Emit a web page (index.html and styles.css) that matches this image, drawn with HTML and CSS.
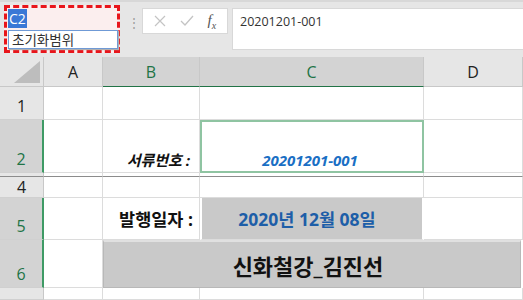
FILE: index.html
```html
<!DOCTYPE html>
<html lang="ko">
<head>
    <meta charset="UTF-8">
    <title>서류번호</title>
    <link rel="stylesheet" href="styles.css">
</head>
<body>
    <div class="topbar">
        <div class="namebox">
            <div class="ref"><span class="sel">C2</span></div>
            <div class="namelist">초기화범위</div>
        </div>
        <div class="dots">⋮</div>
        <div class="fxbtns">
            <svg width="12" height="12" viewBox="0 0 12 12"><path d="M1 1 L11 11 M11 1 L1 11" stroke="#c4c4c4" stroke-width="1.2" fill="none"/></svg>
            <svg width="14" height="12" viewBox="0 0 14 12"><path d="M1 6 L5 10 L13 1" stroke="#c4c4c4" stroke-width="1.3" fill="none"/></svg>
            <span class="fx">f<sub>x</sub></span>
        </div>
        <div class="formula">20201201-001</div>
    </div>

    <div class="sheet">
        <div class="corner"><span class="tri"></span></div>
        <div class="colhead">A</div>
        <div class="colhead on">B</div>
        <div class="colhead on">C</div>
        <div class="colhead">D</div>

        <div class="rowhead">1</div>
        <div class="cell"></div>
        <div class="cell"></div>
        <div class="cell"></div>
        <div class="cell"></div>

        <div class="rowhead on">2</div>
        <div class="cell"></div>
        <div class="cell label-i">서류번호 :</div>
        <div class="cell active">20201201-001</div>
        <div class="cell"></div>

        <div class="rowhead hid"></div>
        <div class="cell hid"></div>
        <div class="cell hid"></div>
        <div class="cell hid"></div>
        <div class="cell hid"></div>

        <div class="rowhead r4">4</div>
        <div class="cell"></div>
        <div class="cell"></div>
        <div class="cell"></div>
        <div class="cell"></div>

        <div class="rowhead on">5</div>
        <div class="cell"></div>
        <div class="cell label">발행일자 :</div>
        <div class="cell date">2020년 12월 08일</div>
        <div class="cell"></div>

        <div class="rowhead on">6</div>
        <div class="cell"></div>
        <div class="cell title">신화철강_김진선</div>

        <div class="rowhead"></div>
        <div class="cell"></div>
        <div class="cell"></div>
        <div class="cell"></div>
        <div class="cell"></div>
    </div>
</body>
</html>
```

FILE: styles.css
```css
body {
    margin: 0;
    width: 523px;
    height: 300px;
    overflow: hidden;
    font-family: "Noto Sans CJK KR", "Noto Sans", sans-serif;
    background: #fff;
}
.topbar {
    height: 57px;
    background: #e6e6e6;
    display: flex;
    align-items: flex-start;
    box-sizing: border-box;
    border-top: 2px solid #d8d8d8;
}
.namebox {
    margin: 3px 0 0 4px;
    width: 116px;
    height: 48px;
    box-sizing: border-box;
    border: 3px dashed #e8151b;
    background: #fbeeee;
    padding: 2px 0 0 1px;
}
.ref {
    height: 17px;
    font-size: 14px;
    line-height: 16px;
    color: #fff;
}
.sel {
    background: #3a78d6;
    padding: 0 1px;
    font-family: "Open Sans", sans-serif;
}
.namelist {
    margin-top: 3px;
    width: 110px;
    height: 19px;
    box-sizing: border-box;
    border: 1px solid #6f9ad6;
    box-shadow: 1px 1px 1px #b0b0b0;
    background: #fff;
    font-size: 13.5px;
    line-height: 16px;
    padding-left: 3px;
    color: #333;
}
.dots {
    margin: 11px 0 0 8px;
    width: 14px;
    color: #9a9a9a;
    font-size: 12px;
}
.fxbtns {
    margin: 6px 0 0 0;
    width: 86px;
    height: 26px;
    box-sizing: border-box;
    background: #fff;
    border: 1px solid #d8d8d8;
    display: flex;
    align-items: center;
    justify-content: space-around;
    padding: 0 4px;
}
.fx {
    font-family: "Liberation Serif", serif;
    font-style: italic;
    font-size: 15px;
    color: #555;
}
.fx sub {
    font-size: 10px;
}
.formula {
    margin: 6px 0 0 4px;
    flex: 1;
    height: 42px;
    background: #fff;
    border: 1px solid #d8d8d8;
    border-right: none;
    font-family: "Open Sans", sans-serif;
    font-size: 12.5px;
    color: #333;
    padding: 4px 0 0 7px;
    box-sizing: border-box;
}
.sheet {
    display: grid;
    grid-template-columns: 44px 59px 97px 224px 99px;
    grid-template-rows: 30px 33px 53px 4px 21px 42px 48px 12px;
}
.corner {
    background: #e6e6e6;
    border-right: 1px solid #c8c8c8;
    border-bottom: 1px solid #c8c8c8;
    position: relative;
}
.tri {
    position: absolute;
    right: 3px;
    bottom: 3px;
    width: 0;
    height: 0;
    border-left: 26px solid transparent;
    border-bottom: 22px solid #bdbdbd;
}
.colhead {
    background: #e6e6e6;
    border-right: 1px solid #c8c8c8;
    border-bottom: 1px solid #c8c8c8;
    font-family: "Open Sans", sans-serif;
    font-size: 16px;
    color: #222;
    display: flex;
    align-items: center;
    justify-content: center;
}
.colhead.on {
    background: #d3d3d3;
    color: #217346;
    border-bottom: 1px solid #217346;
}
.rowhead {
    background: #e6e6e6;
    border-right: 1px solid #c8c8c8;
    border-bottom: 1px solid #d0d0d0;
    font-family: "Open Sans", sans-serif;
    font-size: 16px;
    color: #222;
    display: flex;
    align-items: flex-end;
    justify-content: center;
    line-height: 26px;
    overflow: hidden;
}
.rowhead.on {
    background: #d3d3d3;
    color: #217346;
    border-right: 2px solid #3f9a65;
}
.rowhead.r4 {
    align-items: center;
    line-height: 20px;
}
.rowhead.hid,
.cell.hid {
    border-bottom: 1px solid #8c8c8c;
    background: #fff;
}
.rowhead.hid {
    background: #e6e6e6;
}
.cell {
    border-right: 1px solid #dcdcdc;
    border-bottom: 1px solid #dcdcdc;
    display: flex;
    align-items: flex-end;
    justify-content: center;
    font-family: "Open Sans", "Noto Sans CJK KR", sans-serif;
    font-weight: bold;
    box-sizing: border-box;
}
.label-i {
    justify-content: flex-end;
    font-style: italic;
    font-size: 15px;
    padding: 0 9px 2px 0;
    color: #111;
}
.active {
    border: 2px solid #8fc4a2;
    font-style: italic;
    font-size: 15px;
    color: #1a6fc4;
    padding: 0 4px 1px 0;
}
.label {
    justify-content: flex-end;
    align-items: center;
    font-size: 17.5px;
    padding-right: 6px;
    color: #111;
}
.date {
    background: #c9c9c9;
    align-items: center;
    font-size: 17.5px;
    color: #1d5ea8;
    border-left: 2px solid #fff;
    border-right: 2px solid #fff;
    padding-right: 10px;
}
.title {
    grid-column: span 3;
    background: #c9c9c9;
    align-items: center;
    font-size: 22px;
    color: #111;
    border: 1px solid #b8b8b8;
    border-top: 2px solid #e0e0e0;
    margin-right: 2px;
    padding-right: 8px;
}
```
